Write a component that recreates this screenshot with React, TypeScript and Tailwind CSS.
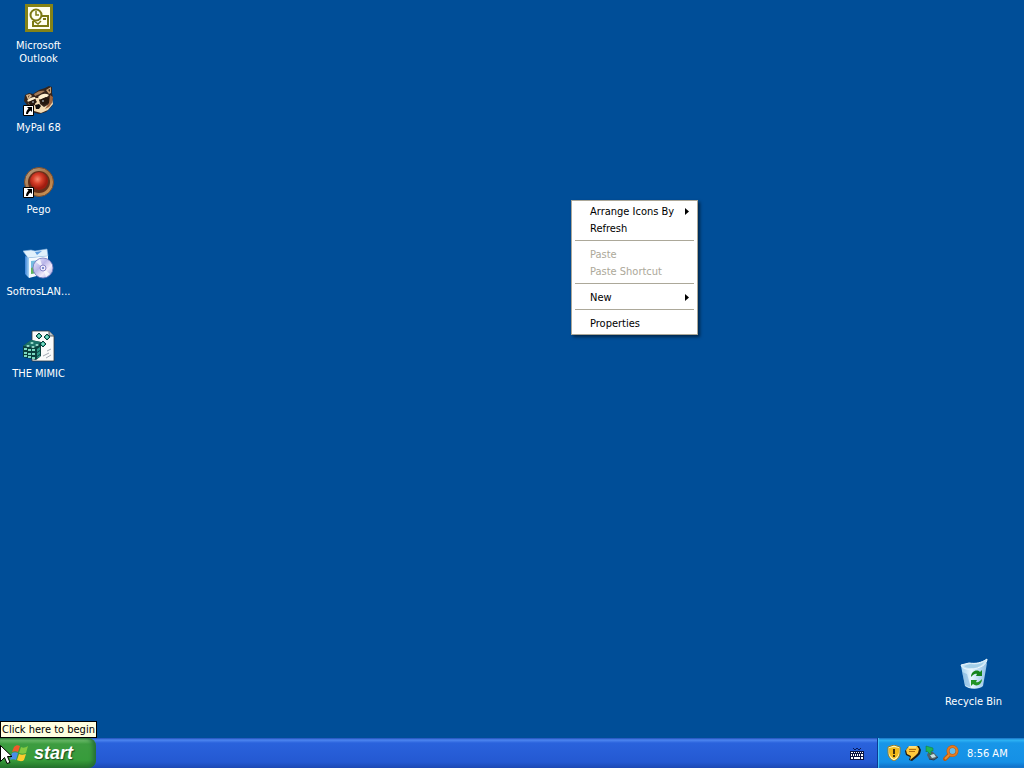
import React from "react";

interface IDesktopItem {
  name: string;
  icon: React.ReactNode;
  shortcut?: boolean;
}

interface IMenuItem {
  label: string;
  disabled?: boolean;
  submenu?: boolean;
}

const OutlookIcon = () => (
  <svg viewBox="0 0 32 32" className="size-8">
    <path d="M2 2h28v28H2z" fill="#858317" />
    <path d="M5 5h22v22H5z" fill="#fffff0" />
    <path d="M18 14h7v10H10v-5" fill="none" stroke="#7b7912" strokeWidth="2" />
    <path d="M11 19l4 3 3-3" fill="none" stroke="#7b7912" strokeWidth="1.500" />
    <path d="M20 16h3v2h-3z" fill="#7b7912" />
    <circle cx="13" cy="13" r="5.500" fill="#fffff0" stroke="#7b7912" strokeWidth="2" />
    <path d="M13 9v4h3" fill="none" stroke="#7b7912" strokeWidth="1.500" />
  </svg>
);

const RaccoonIcon = () => (
  <svg viewBox="0 0 32 32" className="size-8">
    <path d="M2 11l4-2 4 1 6-4 6-2 4-2 3 1v6l1 5-1 8-6 6-7 2-7-2-5-7-3-4z" fill="#35241b" />
    <path d="M3 11l4-1 2 2-4 4z" fill="#d9b78d" />
    <path d="M5 12l2-1-2 3z" fill="#6b4930" />
    <path d="M23 6l5-3v6l-2 1z" fill="#c59c70" />
    <path d="M25 6l2-1v3z" fill="#3b261b" />
    <path d="M11 10c4-3 8-4 11-3l-5 3-5 2z" fill="#a27b59" />
    <path d="M4 17c2-3 5-4 8-4l1 2-7 3zM15 13c4-4 8-4 11-2l-2 2-7 3z" fill="#fff0d0" />
    <path d="M5 18l2 5 4 4 5-2-2-5-4 2z" fill="#f4d6a8" />
    <path d="M13 14l3 0 1 6 4 3 7-4 1-4 1 5-5 6-7 3-7-2z" fill="#f3dcb5" />
    <path d="M5 18l7-3 2 3-4 3-3 1zM16 16l7-3 5 2-2 4-6 2z" fill="#24170f" />
    <path d="M12 21l4-1 2 2-2 3-3 0z" fill="#110e0e" />
    <path d="M27 11l3 2-1 6-3 4-4 2 4-6z" fill="#9e6540" />
    <circle cx="10" cy="18" r="1" fill="#8f9698" />
    <circle cx="20" cy="17" r="1" fill="#8f9698" />
  </svg>
);

const PegoIcon = () => (
  <svg viewBox="0 0 32 32" className="size-8">
    <defs>
      <linearGradient id="pegoRing" x1="0" y1="0" x2="1" y2="1">
        <stop stopColor="#baa58a" />
        <stop offset=".5" stopColor="#a46f43" />
        <stop offset="1" stopColor="#d8a05d" />
      </linearGradient>
      <radialGradient id="pegoBall" cx=".42" cy=".4">
        <stop stopColor="#f58a70" />
        <stop offset=".5" stopColor="#d8402a" />
        <stop offset="1" stopColor="#a01c10" />
      </radialGradient>
    </defs>
    <circle cx="16" cy="16" r="14.500" fill="url(#pegoRing)" stroke="#7a4d2c" />
    <circle cx="16" cy="16" r="11" fill="#65301b" />
    <circle cx="16" cy="15" r="9" fill="url(#pegoBall)" />
  </svg>
);

const InstallerIcon = () => (
  <svg viewBox="0 0 32 32" className="size-8">
    <defs>
      <linearGradient id="boxSide">
        <stop stopColor="#3a82d8" />
        <stop offset="1" stopColor="#a8d5f6" />
      </linearGradient>
      <linearGradient id="disc" x1="0" y1="0" x2="1" y2="1">
        <stop stopColor="#f7f7ff" />
        <stop offset=".4" stopColor="#b9b5e8" />
        <stop offset=".65" stopColor="#f3eafa" />
        <stop offset="1" stopColor="#8e96dc" />
      </linearGradient>
    </defs>
    <path d="M2 8l4 2v20l-4-4z" fill="url(#boxSide)" />
    <path d="M0 3l8-1 4 1 12-2 1 7-20 2z" fill="#e1f1fc" stroke="#88b6e2" strokeWidth=".6" />
    <path d="M6 10l19-2v17L6 30z" fill="#f5fafe" />
    <path d="M8 13l9-1v12l-9 2z" fill="#75bde0" />
    <path d="M8 20l9-3v7l-9 2z" fill="#62b55c" />
    <path d="M12 4l2 3 5-4z" fill="#5a9be0" />
    <circle cx="20" cy="20" r="10" fill="url(#disc)" stroke="#7177bd" strokeWidth=".8" />
    <path d="M20 20l-7-6 4-3zM20 20l7 6-4 3z" fill="#fff" opacity=".75" />
    <circle cx="20" cy="20" r="3" fill="#eceafb" stroke="#8a86c8" />
    <circle cx="20" cy="20" r="1" fill="#5b6dbb" />
  </svg>
);

const RegistryIcon = () => (
  <svg viewBox="0 0 32 32" className="size-8">
    <path d="M9 1h17l5 5v25H9z" fill="#fafafa" stroke="#30383e" strokeWidth=".8" />
    <path d="M26 1v5h5" fill="#b9c2c8" stroke="#30383e" strokeWidth=".8" />
    <path d="M20 26l6-3M23 28l5-3M24 21l4-2" stroke="#a3a8b3" />
    <path d="M0 16l8-6 10 2v14l-5 4-13-3z" fill="#0b413e" />
    <path d="M0 16l8-6 10 2-5 5z" fill="#1c7269" />
    <g fill="#7bd8c0">
      <path d="M1 18h3v2H1zM5 19h3v2H5zM9 19h3v2H9zM1 22h3v2H1zM5 23h3v2H5zM9 23h3v2H9zM1 25h3v2H1zM5 26h3v2H5zM9 27h3v2H9z" />
      <path d="M3 16l2-1 2 1-2 1zM8 17l2-1 2 1-2 1zM7 13l2-1 2 1-2 1zM12 15l2-1 2 1-2 1z" fill="#b8f7e6" />
    </g>
    <path d="M14 19l3-2v3l-3 2zM14 23l3-2v3l-3 2zM14 27l3-2v2l-3 1z" fill="#2e998a" />
    <g fill="#3fb49c" stroke="#093b38">
      <path d="M16 3l3 3-3 3-3-3zM24 4l3 3-3 3-3-3zM20 11l3 3-3 3-3-3z" />
    </g>
    <path d="M15 6l1-1 1 1-1 1zM23 7l1-1 1 1-1 1zM19 14l1-1 1 1-1 1z" fill="#b8f7e6" />
  </svg>
);

const RecycleBinIcon = () => (
  <svg viewBox="0 0 32 32" className="size-8">
    <defs>
      <linearGradient id="bin">
        <stop stopColor="#a4d2f0" />
        <stop offset=".4" stopColor="#e9f7ff" />
        <stop offset="1" stopColor="#8fbfe5" />
      </linearGradient>
    </defs>
    <path d="M3 8l4 20c3 3 14 4 18 0l4-23-13 6z" fill="url(#bin)" />
    <path d="M3 7l8-2c7 1 12 0 18-4 0 6-7 9-15 10-6 1-10-1-11-4z" fill="#c8e6f6" stroke="#eef9ff" />
    <path d="M6 8l6-2c6 1 10 0 14-2-2 4-7 6-12 6-3 0-6 0-8-2z" fill="#a5d0e9" />
    <path d="M4 14l3 13 6 3-4-14z" fill="#74acd9" opacity=".5" />
    <path d="M13 19c0-6 6-8 9-5l2-2v6h-6l1-2c-2-1-4 1-6 3z" fill="#16841c" />
    <path d="M24 21c0 6-6 8-9 5l-2 2v-6h6l-1 2c2 1 4-1 6-3z" fill="#229325" />
  </svg>
);

const ShortcutArrow = () => (
  <svg viewBox="0 0 11 11" className="absolute bottom-0 left-0 size-[11px]">
    <path d="M.5.5h10v10H.5z" fill="#fff" stroke="#000" />
    <path d="M4 2h5v5L7.500 5.500C6 6.500 5 8 5 9H3c0-2 1-4 2.500-5.500z" fill="#000" />
  </svg>
);

const WindowsFlag = () => (
  <svg viewBox="0 0 20 20" className="size-5">
    <path d="M4 4c2-2 4-2 6-1L8 9c-2-1-4-1-6 0z" fill="#f0592b" />
    <path d="M11 4c2 1 4 1 7-1l-2 7c-2 1-5 1-7 0z" fill="#83c941" />
    <path d="M2 10c2-1 4-1 6 0l-2 7c-2-1-4-1-6 0z" fill="#4b8de8" />
    <path d="M9 11c2 1 4 1 7 0l-2 6c-2 2-5 1-7 0z" fill="#ffcb2e" />
  </svg>
);

const KeyboardIcon = () => (
  <svg viewBox="0 0 16 16" className="size-4">
    <path d="M4 3h1v1H4zM5 4h2v1H5zM7 3h2v1H7zM9 4h2v1H9zM11 3h1v1h-1z" fill="#091b57" />
    <path d="M1 6h14v9H1z" fill="#0a1440" />
    <path
      d="M2 7h2v1H2zM5 7h1v1H5zM7 7h1v1H7zM9 7h1v1H9zM11 7h1v1h-1zM13 7h1v1h-1zM2 9h1v2H2zM4 9h1v2H4zM6 9h1v2H6zM8 9h1v2H8zM10 9h1v2h-1zM12 9h2v2h-2zM2 12h2v2H2zM5 12h6v2H5zM12 12h2v2h-2z"
      fill="#fff"
    />
  </svg>
);

const ShieldIcon = () => (
  <svg viewBox="0 0 16 16" className="size-4">
    <path d="M8 0l6 2v5c0 4-2 7-6 9-4-2-6-5-6-9V2z" fill="#fff5b3" stroke="#9b7c24" />
    <path d="M8 2l5 1v4c0 3-2 5-5 7-3-2-5-4-5-7V3z" fill="#f0b91c" />
    <path d="M7 4h2v5H7zM7 10h2v2H7z" fill="#3f300d" />
  </svg>
);

const ChatIcon = () => (
  <svg viewBox="0 0 16 16" className="size-4">
    <path d="M3 2l5-1 6 0 2 4-1 4-3 3-5 4-3-1 1-3-4-2-1-4z" fill="#211a12" />
    <path d="M4 1h8l2 3-1 4-3 3-5 4 1-4-4-2-1-4z" fill="#ffc83c" />
    <path d="M4 4.500h7M4 6.500h6" stroke="#b06e10" />
    <path d="M4 2h7" stroke="#fff2ba" />
  </svg>
);

const DeviceIcon = () => (
  <svg viewBox="0 0 16 16" className="size-4">
    <path d="M5 6l4 1 5 5-4 3-5-1-2-4z" fill="#526269" />
    <path d="M6 10l4-1 2 3-4 1z" fill="#c9e0e3" />
    <path d="M2 1l7 2v3l-2 0 0 4-4-4-1 1z" fill="#21b456" stroke="#10763b" strokeWidth=".5" />
    <path d="M5 14l5 1 4-3" fill="none" stroke="#253a54" />
  </svg>
);

const SearchIcon = () => (
  <svg viewBox="0 0 16 16" className="size-4">
    <path d="M6 10l-4 4" stroke="#b95b12" strokeWidth="4" strokeLinecap="round" />
    <circle cx="9.500" cy="6" r="4.500" fill="#63bdee" stroke="#b9590f" strokeWidth="3" />
    <circle cx="9.500" cy="6" r="4.500" fill="none" stroke="#e57c20" strokeWidth="2" />
    <path d="M6 10l-4 4" stroke="#ee8c2b" strokeWidth="2" />
  </svg>
);

const desktopItems: IDesktopItem[] = [
  { name: "Microsoft Outlook", icon: <OutlookIcon /> },
  { name: "MyPal 68", icon: <RaccoonIcon />, shortcut: true },
  { name: "Pego", icon: <PegoIcon />, shortcut: true },
  { name: "SoftrosLAN...", icon: <InstallerIcon /> },
  { name: "THE MIMIC", icon: <RegistryIcon /> },
];

const menuGroups: IMenuItem[][] = [
  [{ label: "Arrange Icons By", submenu: true }, { label: "Refresh" }],
  [
    { label: "Paste", disabled: true },
    { label: "Paste Shortcut", disabled: true },
  ],
  [{ label: "New", submenu: true }],
  [{ label: "Properties" }],
];

const DesktopIcon = ({ name, icon, shortcut }: IDesktopItem) => (
  <button className="flex h-[82px] w-[77px] flex-col items-center gap-[5px] pt-[2px] text-white">
    <span className="relative">
      {icon}
      {shortcut && <ShortcutArrow />}
    </span>
    <span className="px-1">{name}</span>
  </button>
);

const ContextMenu = () => (
  <div
    role="menu"
    className="absolute top-[200px] left-[571px] w-[127px] border border-[#aca899] bg-white p-[2px] shadow-[2px_2px_3px_rgba(0,0,0,0.5)]"
  >
    {menuGroups.map((group, index) => (
      <React.Fragment key={index}>
        {index > 0 && <hr className="mx-px mt-[3px] mb-[5px] border-[#aca899]" />}
        {group.map((item) => (
          <button
            key={item.label}
            role="menuitem"
            disabled={item.disabled}
            className="flex h-[17px] w-full items-center justify-between pr-[6px] pl-4 text-left whitespace-nowrap text-black disabled:text-[#aca899]"
          >
            {item.label}
            {item.submenu && (
              <svg viewBox="0 0 4 7" className="h-[7px] w-1">
                <path d="M0 0l4 3.500L0 7z" />
              </svg>
            )}
          </button>
        ))}
      </React.Fragment>
    ))}
  </div>
);

const Taskbar = () => (
  <footer className="relative flex h-[30px] shrink-0 items-stretch bg-[linear-gradient(#1f4fb8_0px,#4d86f0_2px,#2a62dc_5px,#2459d2_24px,#1c48b4_30px)]">
    <button className="flex w-24 items-center gap-1 rounded-r-lg bg-[linear-gradient(#2f7a35_0px,#6fbf6c_2px,#3d9c40_6px,#379c3b_22px,#24742a_30px)] pl-[10px] font-['Liberation_Sans',Arial,sans-serif] text-[18px] font-bold text-white italic shadow-[inset_-3px_0_4px_#256e35] [text-shadow:1px_1px_1px_#1c4a20]">
      <WindowsFlag />
      <span className="leading-5">start</span>
    </button>
    <div className="flex flex-1 items-center justify-end pr-3">
      <button aria-label="Keyboard">
        <KeyboardIcon />
      </button>
    </div>
    <div className="flex w-[147px] items-center gap-[3px] border-l border-[#0d3a94] bg-[linear-gradient(#1364bd_0px,#2fb4f4_2px,#1896e8_5px,#1590e6_24px,#0f6bc4_30px)] pl-2 text-white shadow-[inset_1px_0_1px_#48c8fa]">
      <ShieldIcon />
      <ChatIcon />
      <DeviceIcon />
      <SearchIcon />
      <time className="ml-[5px] whitespace-nowrap">8:56 AM</time>
    </div>
    <div
      role="tooltip"
      className="absolute bottom-full left-0 border border-black bg-[#ffffe1] px-px py-px whitespace-nowrap text-black"
    >
      Click here to begin
    </div>
    <svg viewBox="0 0 12 20" className="absolute top-[7px] left-0 h-5 w-3">
      <path d="M.5.5v16l4-4 2.500 6 3-1-2.500-6h4.500z" fill="#fff" stroke="#000" />
    </svg>
  </footer>
);

const App = () => {
  return (
    <div className="flex h-screen flex-col overflow-hidden bg-[#004e98] font-['DejaVu_Sans_Condensed','DejaVu_Sans',sans-serif] text-[11px] leading-[13px]">
      <main className="relative flex-1">
        <div className="flex flex-col">
          {desktopItems.map((item) => (
            <DesktopIcon key={item.name} {...item} />
          ))}
        </div>
        <div className="absolute right-3 bottom-0">
          <DesktopIcon name="Recycle Bin" icon={<RecycleBinIcon />} />
        </div>
        <ContextMenu />
      </main>
      <Taskbar />
    </div>
  );
};

export default App;
